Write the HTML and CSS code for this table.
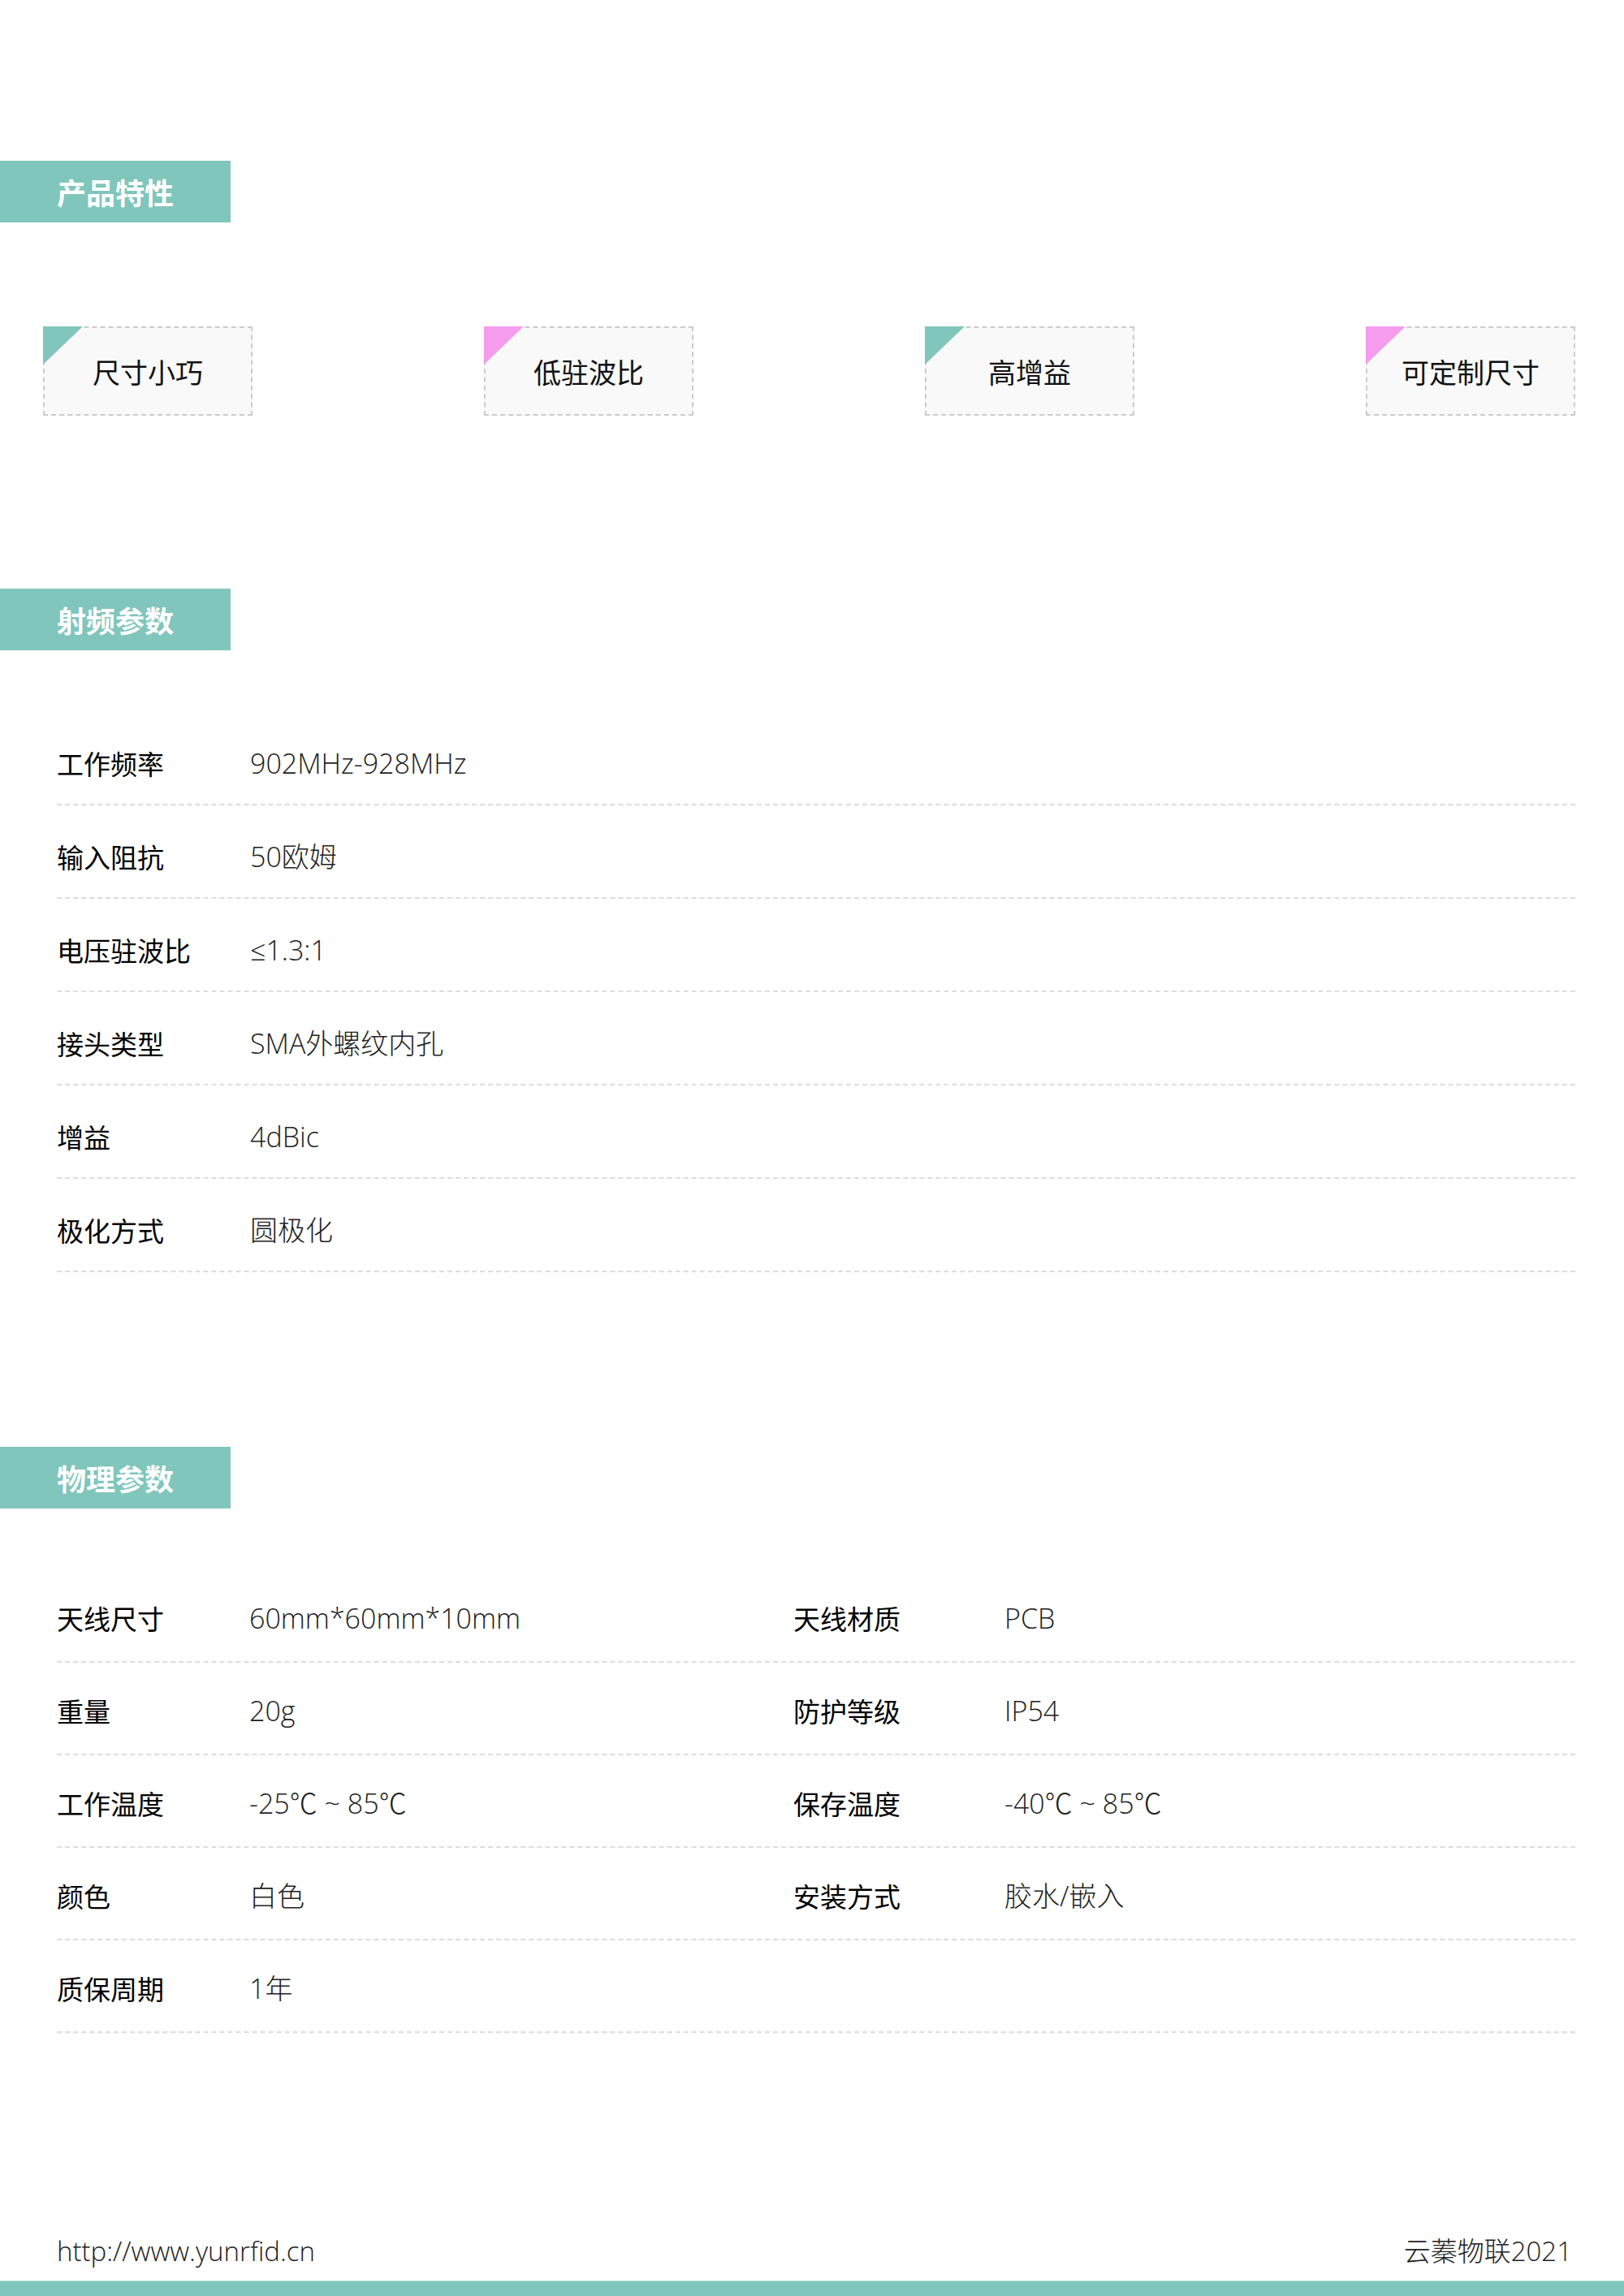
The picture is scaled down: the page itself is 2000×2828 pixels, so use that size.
FILE: index.html
```html
<!DOCTYPE html>
<html lang="zh-CN">
<head>
<meta charset="utf-8">
<title>产品参数</title>
<link rel="stylesheet" href="styles.css">
</head>
<body>
<main class="page">
  <section class="sec sec-first">
    <h2 class="sec-title">产品特性</h2>
    <div class="features">
      <div class="feature feature-teal">尺寸小巧</div>
      <div class="feature feature-pink">低驻波比</div>
      <div class="feature feature-teal">高增益</div>
      <div class="feature feature-pink">可定制尺寸</div>
    </div>
  </section>

  <section class="sec sec-rf">
    <h2 class="sec-title">射频参数</h2>
    <div class="table table-rf">
      <div class="row"><span class="label">工作频率</span><span class="value">902MHz-928MHz</span></div>
      <div class="row"><span class="label">输入阻抗</span><span class="value">50欧姆</span></div>
      <div class="row"><span class="label">电压驻波比</span><span class="value">≤1.3:1</span></div>
      <div class="row"><span class="label">接头类型</span><span class="value">SMA外螺纹内孔</span></div>
      <div class="row"><span class="label">增益</span><span class="value">4dBic</span></div>
      <div class="row"><span class="label">极化方式</span><span class="value">圆极化</span></div>
    </div>
  </section>

  <section class="sec sec-phys">
    <h2 class="sec-title">物理参数</h2>
    <div class="table table-phys">
      <div class="row row4"><span class="label">天线尺寸</span><span class="value">60mm*60mm*10mm</span><span class="label">天线材质</span><span class="value">PCB</span></div>
      <div class="row row4"><span class="label">重量</span><span class="value">20g</span><span class="label">防护等级</span><span class="value">IP54</span></div>
      <div class="row row4"><span class="label">工作温度</span><span class="value">-25℃ ~ 85℃</span><span class="label">保存温度</span><span class="value">-40℃ ~ 85℃</span></div>
      <div class="row row4"><span class="label">颜色</span><span class="value">白色</span><span class="label">安装方式</span><span class="value">胶水/嵌入</span></div>
      <div class="row row4"><span class="label">质保周期</span><span class="value">1年</span><span class="label"></span><span class="value"></span></div>
    </div>
  </section>

  <footer class="footer">
    <span class="footer-url">http://www.yunrfid.cn</span>
    <span class="footer-brand">云蓁物联2021</span>
  </footer>
  <div class="footer-bar"></div>
</main>
</body>
</html>
```

FILE: styles.css
```css
html, body {
  margin: 0;
  padding: 0;
  background: #ffffff;
}

.page {
  width: 2000px;
  height: 2828px;
  overflow: hidden;
  padding-top: 198px;
  box-sizing: border-box;
  display: flex;
  flex-direction: column;
  font-family: "Open Sans", "Noto Sans CJK SC", sans-serif;
}

.sec-title {
  margin: 0;
  width: 284px;
  height: 76px;
  line-height: 76px;
  background: #80c6bc;
  color: #ffffff;
  font-family: "Noto Sans CJK SC", sans-serif;
  font-weight: 700;
  font-size: 36px;
  text-align: center;
}

.sec-rf {
  margin-top: 213px;
}

.sec-phys {
  margin-top: 215px;
}

.features {
  margin-top: 128px;
  padding-left: 53px;
  display: grid;
  grid-template-columns: repeat(4, 258px);
  column-gap: 285px;
}

.feature {
  position: relative;
  height: 110px;
  box-sizing: border-box;
  border: 2px dashed #cccccc;
  background: #f9f9f9;
  display: flex;
  align-items: center;
  justify-content: center;
  font-family: "Noto Sans CJK SC", sans-serif;
  font-size: 34px;
  color: #111111;
}

.feature::before {
  content: "";
  position: absolute;
  top: -2px;
  left: -2px;
  width: 49px;
  height: 47px;
  clip-path: polygon(0 0, 100% 0, 0 100%);
}

.feature-teal::before {
  background: #80c6bc;
}

.feature-pink::before {
  background: #f59cee;
}

.table {
  margin-top: 76px;
  padding: 0 60px 0 70px;
  display: flex;
  flex-direction: column;
}

.row {
  display: grid;
  grid-template-columns: 238px 1fr;
  align-items: center;
  padding-top: 38px;
  padding-bottom: 25px;
  line-height: 50px;
  border-bottom: 2px dashed #dddddd;
}

.table-phys .row {
  padding-top: 34px;
  padding-bottom: 28px;
}

.row4 {
  grid-template-columns: 237px 670px 260px 1fr;
}

.label {
  font-family: "Noto Sans CJK SC", sans-serif;
  font-weight: 400;
  font-size: 33px;
  color: #000000;
}

.value {
  font-family: "Open Sans", "Noto Sans CJK SC", sans-serif;
  font-weight: 300;
  font-size: 34px;
  color: #222222;
}

.footer {
  margin-top: auto;
  padding: 0 64px 0 70px;
  display: flex;
  justify-content: space-between;
  align-items: center;
  line-height: 50px;
  font-family: "Open Sans", "Noto Sans CJK SC", sans-serif;
  font-weight: 300;
  font-size: 33px;
  color: #222222;
}

.footer-bar {
  margin-top: 11px;
  height: 19px;
  background: #80c6bc;
  border-top: 1px solid #a9dad3;
  box-sizing: border-box;
  flex: none;
}
```
